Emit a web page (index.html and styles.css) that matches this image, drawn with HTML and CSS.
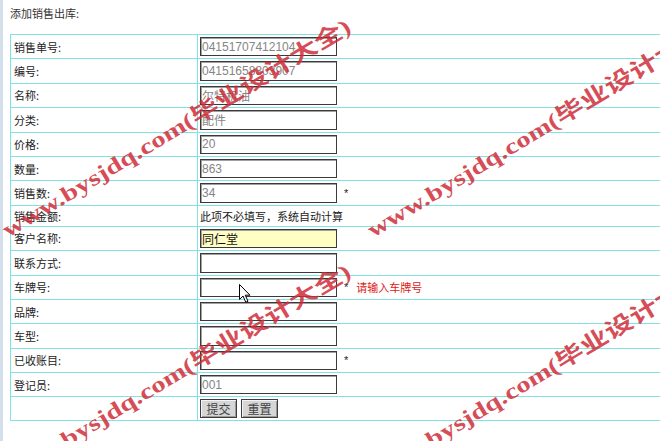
FILE: index.html
```html
<!DOCTYPE html>
<html>
<head>
<meta charset="utf-8">
<link rel="stylesheet" href="styles.css">
</head>
<body>
<div class="page">
  <div class="title">添加销售出库:</div>
  <table class="form">
    <tr><td class="label">销售单号:</td><td class="value"><input class="ro" type="text" value="04151707412104" readonly></td></tr>
    <tr><td class="label">编号:</td><td class="value"><input class="ro" type="text" value="04151658303907" readonly></td></tr>
    <tr><td class="label">名称:</td><td class="value"><input class="ro" type="text" value="尔特机油" readonly></td></tr>
    <tr><td class="label">分类:</td><td class="value"><input class="ro" type="text" value="配件" readonly></td></tr>
    <tr><td class="label">价格:</td><td class="value"><input class="ro" type="text" value="20" readonly></td></tr>
    <tr><td class="label">数量:</td><td class="value"><input class="ro" type="text" value="863" readonly></td></tr>
    <tr><td class="label">销售数:</td><td class="value"><input class="ro" type="text" value="34"><span class="star">*</span></td></tr>
    <tr class="textrow"><td class="label">销售金额:</td><td class="value">此项不必填写，系统自动计算</td></tr>
    <tr><td class="label">客户名称:</td><td class="value"><input class="hl" type="text" value="同仁堂"></td></tr>
    <tr><td class="label">联系方式:</td><td class="value"><input type="text"></td></tr>
    <tr><td class="label">车牌号:</td><td class="value"><input type="text"><span class="star">*</span><span class="hint">请输入车牌号</span></td></tr>
    <tr><td class="label">品牌:</td><td class="value"><input type="text"></td></tr>
    <tr><td class="label">车型:</td><td class="value"><input type="text"></td></tr>
    <tr><td class="label">已收账目:</td><td class="value"><input type="text"><span class="star">*</span></td></tr>
    <tr><td class="label">登记员:</td><td class="value"><input class="ro" type="text" value="001" readonly></td></tr>
    <tr class="btnrow"><td class="label"></td><td class="value"><button class="btn">提交</button><button class="btn">重置</button></td></tr>
  </table>
</div>
<svg class="watermark" width="660" height="441" viewBox="0 0 660 441">
  <g class="wm">
    <text transform="translate(8,238) rotate(-31)" textLength="402" lengthAdjust="spacingAndGlyphs">www.bysjdq.com(毕业设计大全)</text>
    <text transform="translate(373,238) rotate(-31)" textLength="402" lengthAdjust="spacingAndGlyphs">www.bysjdq.com(毕业设计大全)</text>
    <text transform="translate(8,483) rotate(-31)" textLength="402" lengthAdjust="spacingAndGlyphs">www.bysjdq.com(毕业设计大全)</text>
    <text transform="translate(373,483) rotate(-31)" textLength="402" lengthAdjust="spacingAndGlyphs">www.bysjdq.com(毕业设计大全)</text>
  </g>
</svg>
<svg class="cursor" width="14" height="20" viewBox="0 0 14 20">
  <path d="M0.5 0.5 L0.5 15.5 L4 12 L6.8 18.3 L9 17.3 L6.3 11.2 L11 11.2 Z" fill="#fff" stroke="#000" stroke-width="1"/>
</svg>
</body>
</html>
```
FILE: styles.css
```css
html, body {
  margin: 0;
  padding: 0;
  background: #fff;
  overflow: hidden;
}
body {
  font-family: "Noto Sans CJK SC", "Liberation Sans", sans-serif;
  font-size: 11px;
  color: #222;
  width: 660px;
  height: 441px;
  position: relative;
}
.page {
  border-left: 3px solid #d3dfeb;
  padding: 7px 0 0 7px;
  height: 441px;
  box-sizing: border-box;
  width: 740px;
}
.title {
  height: 27px;
  line-height: 13px;
  color: #333;
}
.form {
  border-collapse: collapse;
  width: 720px;
}
.form td {
  border: 1px solid #80e2e2;
  padding: 2px 1px 2px 2px;
  line-height: 14px;
  vertical-align: middle;
  white-space: nowrap;
}
.form td.label {
  width: 183px;
  padding-left: 3px;
  padding-right: 0;
}
.form .textrow td {
  padding-top: 3px;
  padding-bottom: 3px;
}
.form input {
  box-sizing: border-box;
  width: 137px;
  height: 19.4px;
  margin: 0;
  padding: 0 1px;
  border: 1px solid #3a3a3a;
  box-shadow: inset 1px 1px 0 #a0a0a0;
  font-family: "Liberation Sans", "Noto Sans CJK SC", sans-serif;
  font-size: 12px;
  color: #222;
  background: #fff;
  vertical-align: middle;
  outline: none;
}
.form input.ro {
  color: #858585;
}
.form input.hl {
  background: #ffffc4;
  font-family: "Noto Sans CJK SC", sans-serif;
  color: #111;
}
.star {
  display: inline-block;
  margin-left: 7px;
  vertical-align: middle;
  font-family: "Liberation Sans", sans-serif;
  font-size: 11px;
}
.hint {
  display: inline-block;
  margin-left: 8px;
  vertical-align: middle;
  color: #e01818;
}
.btn {
  box-sizing: border-box;
  width: 37px;
  height: 19px;
  margin: 0 4px 0 0;
  padding: 0;
  border: 1px solid #3e3e3e;
  box-shadow: inset 1px 1px 0 #f4f4f4, inset -1px -1px 0 #9a9a9a;
  background: #d6d6d6;
  font-family: "Noto Sans CJK SC", sans-serif;
  font-size: 12px;
  color: #444;
  vertical-align: middle;
}
.watermark {
  position: absolute;
  left: 0;
  top: 0;
  pointer-events: none;
}
.wm text {
  font-family: "Liberation Serif", "Noto Sans CJK SC", serif;
  font-size: 22px;
  font-weight: bold;
  fill: #cf2d38;
  fill-opacity: 0.85;
}
.cursor {
  position: absolute;
  left: 239px;
  top: 284px;
  pointer-events: none;
}
```
